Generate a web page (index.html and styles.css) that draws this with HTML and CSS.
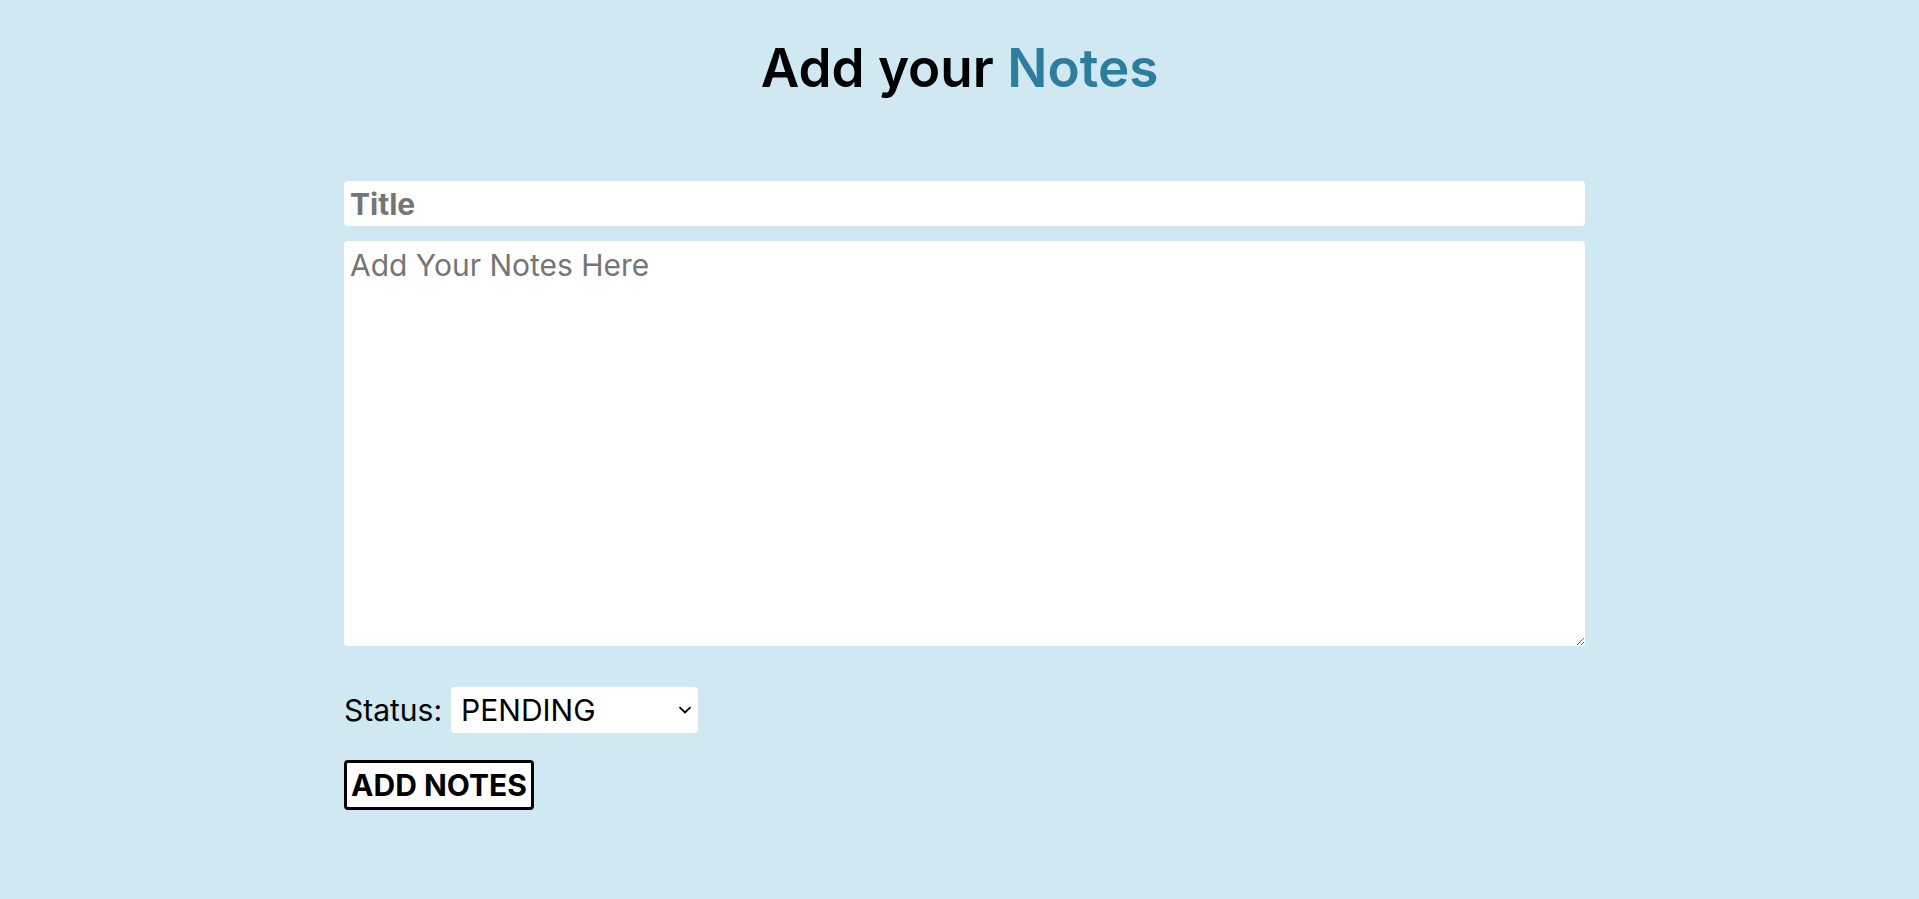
FILE: index.html
```html
<!DOCTYPE html>
<html>
<head>
<meta charset="utf-8">
<link rel="stylesheet" href="styles.css">
</head>
<body>
<h1 class="heading">Add your <span class="accent">Notes</span></h1>
<form class="note-form">
  <input class="title-input" type="text" placeholder="Title">
  <textarea class="notes-input" placeholder="Add Your Notes Here"></textarea>
  <div class="status-row">
    <label class="status-label" for="status">Status:</label>
    <select id="status" class="status-select">
      <option>PENDING</option>
      <option>COMPLETED</option>
    </select>
  </div>
  <button type="button" class="add-btn">ADD NOTES</button>
</form>
</body>
</html>
```
FILE: styles.css
```css
html, body {
  margin: 0;
  padding: 0;
  background: #d0e8f2;
  font-family: "Inter", "Liberation Sans", sans-serif;
  height: 100%;
}
.heading {
  margin: 0;
  padding-top: 36px;
  text-align: center;
  font-size: 53px;
  font-weight: 600;
  line-height: 64px;
  color: #000;
}
.accent {
  color: #2e7d9c;
}
.note-form {
  width: 1251px;
  box-sizing: border-box;
  margin: 81px auto 0;
  padding-left: 10px;
  display: flex;
  flex-direction: column;
  align-items: flex-start;
}
.title-input {
  box-sizing: border-box;
  width: 100%;
  height: 45px;
  border: none;
  border-radius: 4px;
  padding: 0 6px;
  font-family: inherit;
  font-size: 30px;
  font-weight: 700;
  background: #fff;
  outline: none;
}
.title-input::placeholder { color: #757575; }
.notes-input {
  box-sizing: border-box;
  width: 100%;
  height: 405px;
  margin-top: 15px;
  border: none;
  border-radius: 4px;
  padding: 6px 6px;
  font-family: inherit;
  font-size: 30px;
  background: #fff;
  outline: none;
}
.notes-input::placeholder { color: #757575; }
.status-row {
  margin-top: 41px;
  display: flex;
  align-items: center;
  gap: 9px;
}
.status-label {
  font-size: 30px;
  color: #000;
}
.status-select {
  -webkit-appearance: none;
  appearance: none;
  width: 247px;
  height: 46px;
  border: none;
  border-radius: 4px;
  background-color: #fff;
  background-image: url("data:image/svg+xml;utf8,<svg xmlns='http://www.w3.org/2000/svg' width='14' height='8' viewBox='0 0 14 8'><path d='M1.5 1.2 L7 6.5 L12.5 1.2' fill='none' stroke='black' stroke-width='1.8'/></svg>");
  background-repeat: no-repeat;
  background-position: right 6px center;
  background-size: 14px 8px;
  font-family: inherit;
  font-size: 30px;
  padding: 0 10px;
  color: #000;
}
.add-btn {
  margin-top: 27px;
  width: 190px;
  height: 50px;
  border: 3px solid #000;
  border-radius: 4px;
  background: #fff;
  font-family: inherit;
  font-size: 30px;
  font-weight: 700;
  padding: 0;
  color: #000;
}
```
